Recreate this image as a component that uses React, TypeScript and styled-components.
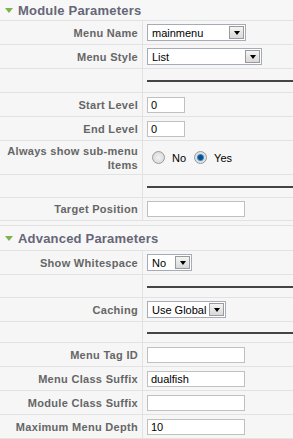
import React from "react";
import styled, { createGlobalStyle } from "styled-components";

const GlobalStyle = createGlobalStyle`
  html, body {
    margin: 0;
    padding: 0;
    background: #f6f6f6;
  }
  body {
    font-family: "Liberation Sans", Arial, sans-serif;
    font-size: 11px;
  }
`;

const Pane = styled.div`
  width: 293px;
  background: #f6f6f6;
`;

const PaneHeader = styled.div<{ first?: boolean }>`
  height: ${(p) => (p.first ? "20px" : "24px")};
  display: flex;
  align-items: center;
  gap: 5px;
  padding-left: 5px;
  background: #f7f7f7;
  border-top: ${(p) => (p.first ? "none" : "1px solid #e2e2e2")};
  border-bottom: 1px solid #e2e2e2;
  font-size: 13px;
  letter-spacing: 0.2px;
  font-weight: bold;
  color: #666677;
`;

const Triangle = styled.span`
  width: 0;
  height: 0;
  margin-top: 1px;
  border-left: 4px solid transparent;
  border-right: 4px solid transparent;
  border-top: 5px solid #7fb24b;
`;

const ParamTable = styled.div<{ gapAfter?: boolean }>`
  display: grid;
  grid-template-columns: 143px 1fr;
  margin-bottom: ${(p) => (p.gapAfter ? "4px" : "0")};
`;

const Row = styled.div<{ h: number }>`
  display: contents;
  & > * {
    height: ${(p) => p.h}px;
    border-bottom: 1px solid #e2e2e2;
  }
`;

const Label = styled.div`
  display: flex;
  align-items: center;
  justify-content: flex-end;
  text-align: right;
  padding-right: 4px;
  border-right: 1px solid #e2e2e2;
  font-weight: bold;
  letter-spacing: 0.3px;
  color: #666;
  line-height: 14px;
`;

const Field = styled.div`
  display: flex;
  align-items: center;
  padding-left: 4px;
  color: #000;
`;

const TextInput = styled.div<{ w: number }>`
  width: ${(p) => p.w}px;
  height: 16px;
  box-sizing: border-box;
  background: #fff;
  border: 1px solid #c0c0c0;
  padding-left: 3px;
  font-size: 11px;
  line-height: 14px;
  color: #000;
`;

const Select = styled.div<{ w: number }>`
  width: ${(p) => p.w}px;
  height: 17px;
  box-sizing: border-box;
  background: #fff;
  border: 1px solid #a5acb5;
  display: flex;
  align-items: center;
  justify-content: space-between;
  padding: 0 1px 0 4px;
  font-size: 11px;
  color: #000;
`;

const DropButton = styled.span`
  width: 15px;
  height: 13px;
  box-sizing: border-box;
  border: 1px solid #9a9a9a;
  background: linear-gradient(#f4f4f4, #d9d9d9);
  display: flex;
  align-items: center;
  justify-content: center;
  &::after {
    content: "";
    border-left: 3px solid transparent;
    border-right: 3px solid transparent;
    border-top: 4px solid #000;
  }
`;

const Rule = styled.div`
  flex: 1;
  height: 0;
  border-top: 2px solid #444;
  margin-top: 1px;
`;

const RadioGroup = styled.div`
  display: flex;
  align-items: center;
  gap: 6px;
  padding-left: 5px;
  font-size: 11px;
  color: #000;
`;

const Radio = styled.span<{ on?: boolean; spaced?: boolean }>`
  width: 11px;
  height: 11px;
  border-radius: 50%;
  border: 1px solid #9a9a9a;
  background: ${(p) =>
    p.on
      ? "radial-gradient(circle, #0d4f8a 0 2px, #2f8ad0 3px, #e0e0e0 4px)"
      : "radial-gradient(circle, #f2f2f2, #d4d4d4)"};
  margin-right: 1px;
  margin-left: ${(p) => (p.spaced ? "2px" : "0")};
`;

const SelectField = ({ value, w }: { value: string; w: number }) => (
  <Select w={w}>
    <span>{value}</span>
    <DropButton />
  </Select>
);

export default function App() {
  return (
    <>
      <GlobalStyle />
      <Pane>
        <PaneHeader first>
          <Triangle />
          Module Parameters
        </PaneHeader>
        <ParamTable gapAfter>
          <Row h={23}>
            <Label>Menu Name</Label>
            <Field>
              <SelectField value="mainmenu" w={99} />
            </Field>
          </Row>
          <Row h={23}>
            <Label>Menu Style</Label>
            <Field>
              <SelectField value="List" w={115} />
            </Field>
          </Row>
          <Row h={23}>
            <Label />
            <Field>
              <Rule />
            </Field>
          </Row>
          <Row h={23}>
            <Label>Start Level</Label>
            <Field>
              <TextInput w={38}>0</TextInput>
            </Field>
          </Row>
          <Row h={23}>
            <Label>End Level</Label>
            <Field>
              <TextInput w={38}>0</TextInput>
            </Field>
          </Row>
          <Row h={33}>
            <Label>
              Always show sub-menu
              <br />
              Items
            </Label>
            <Field>
              <RadioGroup>
                <Radio />
                No
                <Radio on spaced />
                Yes
              </RadioGroup>
            </Field>
          </Row>
          <Row h={22}>
            <Label />
            <Field>
              <Rule />
            </Field>
          </Row>
          <Row h={22}>
            <Label>Target Position</Label>
            <Field>
              <TextInput w={98} />
            </Field>
          </Row>
        </ParamTable>
        <PaneHeader>
          <Triangle />
          Advanced Parameters
        </PaneHeader>
        <ParamTable>
          <Row h={23}>
            <Label>Show Whitespace</Label>
            <Field>
              <SelectField value="No" w={45} />
            </Field>
          </Row>
          <Row h={22}>
            <Label />
            <Field>
              <Rule />
            </Field>
          </Row>
          <Row h={23}>
            <Label>Caching</Label>
            <Field>
              <SelectField value="Use Global" w={79} />
            </Field>
          </Row>
          <Row h={20}>
            <Label />
            <Field>
              <Rule />
            </Field>
          </Row>
          <Row h={23}>
            <Label>Menu Tag ID</Label>
            <Field>
              <TextInput w={98} />
            </Field>
          </Row>
          <Row h={23}>
            <Label>Menu Class Suffix</Label>
            <Field>
              <TextInput w={98}>dualfish</TextInput>
            </Field>
          </Row>
          <Row h={23}>
            <Label>Module Class Suffix</Label>
            <Field>
              <TextInput w={98} />
            </Field>
          </Row>
          <Row h={23}>
            <Label>Maximum Menu Depth</Label>
            <Field>
              <TextInput w={98}>10</TextInput>
            </Field>
          </Row>
        </ParamTable>
      </Pane>
    </>
  );
}
